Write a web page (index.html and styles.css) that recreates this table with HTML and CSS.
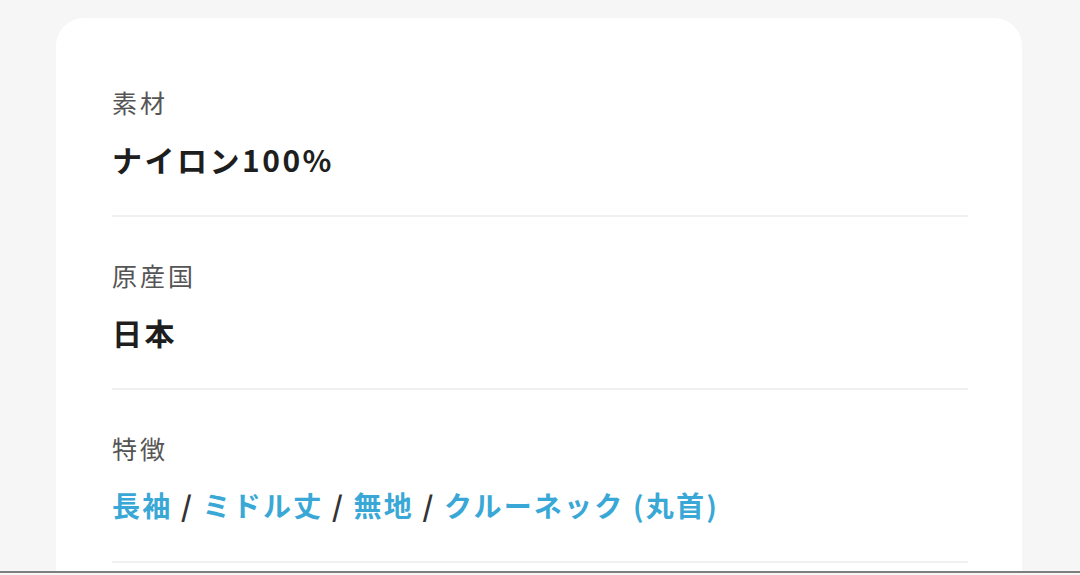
FILE: index.html
```html
<!DOCTYPE html>
<html lang="ja">
<head>
<meta charset="utf-8">
<link rel="stylesheet" href="styles.css">
</head>
<body>
<div class="page">
  <div class="card">
    <div class="section">
      <div class="label">素材</div>
      <div class="value">ナイロン100%</div>
    </div>
    <div class="section">
      <div class="label">原産国</div>
      <div class="value">日本</div>
    </div>
    <div class="section">
      <div class="label">特徴</div>
      <div class="value links"><a class="link">長袖</a> / <a class="link">ミドル丈</a> / <a class="link">無地</a> / <a class="link">クルーネック (丸首)</a></div>
    </div>
  </div>
</div>
</body>
</html>
```
FILE: styles.css
```css
html, body {
  margin: 0;
  padding: 0;
}
body {
  font-family: "Noto Sans CJK JP", "Noto Sans", sans-serif;
  background: #f6f6f6;
}
.page {
  height: 573px;
  border-bottom: 2px solid #7e7e7e;
  overflow: hidden;
  padding: 18px 0 0 56px;
  box-sizing: border-box;
}
.card {
  width: 966px;
  background: #ffffff;
  border-radius: 28px;
  padding: 26px 54px 0 56px;
  box-sizing: border-box;
  min-height: 700px;
}
.section {
  padding: 41px 0 36px;
  border-bottom: 2px solid #f0f0f0;
}
.label {
  font-size: 25px;
  line-height: 34px;
  letter-spacing: 3px;
  color: #555555;
}
.value {
  margin-top: 20px;
  font-size: 30px;
  line-height: 40px;
  letter-spacing: 2.5px;
  font-weight: 700;
  color: #1e1e1e;
}
.links {
  font-size: 28px;
  letter-spacing: 2.2px;
  color: #333333;
}
.link {
  color: #3aa8d6;
  text-decoration: none;
}
```
